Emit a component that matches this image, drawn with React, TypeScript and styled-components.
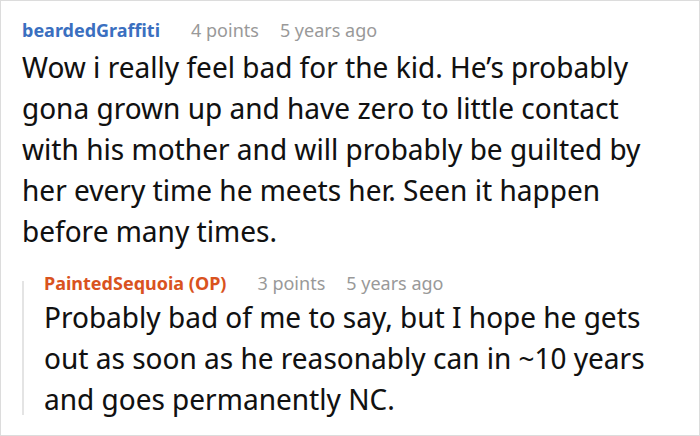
import React from "react";
import styled, { createGlobalStyle } from "styled-components";

const Global = createGlobalStyle`
  html, body { margin: 0; padding: 0; background: #fff; }
  body { font-family: "Noto Sans", "Open Sans", sans-serif; }
`;

const Frame = styled.div`
  box-sizing: border-box;
  width: 700px;
  height: 436px;
  border: 1px solid #dcdcdc;
  padding: 14px 39px 0 21px;
  overflow: hidden;
`;

const Comment = styled.div`
  display: flex;
  flex-direction: column;
`;

const Meta = styled.div`
  display: flex;
  align-items: baseline;
  gap: 21px;
  font-size: 18px;
  line-height: 30px;
  height: 30px;
  white-space: nowrap;
`;

const Author = styled.span<{ $op?: boolean }>`
  font-weight: 700;
  color: ${(p) => (p.$op ? "#d9531e" : "#3a6fc0")};
  margin-right: 10px;
`;

const Info = styled.span`
  color: #999;
`;

const Body = styled.p`
  margin: 1px 0 0;
  font-family: "Noto Sans Display", "Noto Sans", sans-serif;
  font-size: 29.7px;
  line-height: 41px;
  color: #111;
`;

const Reply = styled.div`
  position: relative;
  margin-top: 17px;
  padding-left: 22px;
  display: flex;
  flex-direction: column;
  &::before {
    content: "";
    position: absolute;
    left: 0;
    top: 13px;
    bottom: 4px;
    width: 2px;
    background: #e4e4e4;
  }
  ${Body} {
    margin-top: -2px;
  }
`;

export default function App() {
  return (
    <>
      <Global />
      <Frame>
        <Comment>
          <Meta>
            <Author>beardedGraffiti</Author>
            <Info>4 points</Info>
            <Info>5 years ago</Info>
          </Meta>
          <Body>
            Wow i really feel bad for the kid. He’s probably gona grown up and have zero to little contact with his mother and will probably be guilted by her every time he meets her. Seen it happen before many times.
          </Body>
        </Comment>
        <Reply>
          <Meta>
            <Author $op>PaintedSequoia (OP)</Author>
            <Info>3 points</Info>
            <Info>5 years ago</Info>
          </Meta>
          <Body>
            Probably bad of me to say, but I hope he gets out as soon as he reasonably can in ~10 years and goes permanently NC.
          </Body>
        </Reply>
      </Frame>
    </>
  );
}
